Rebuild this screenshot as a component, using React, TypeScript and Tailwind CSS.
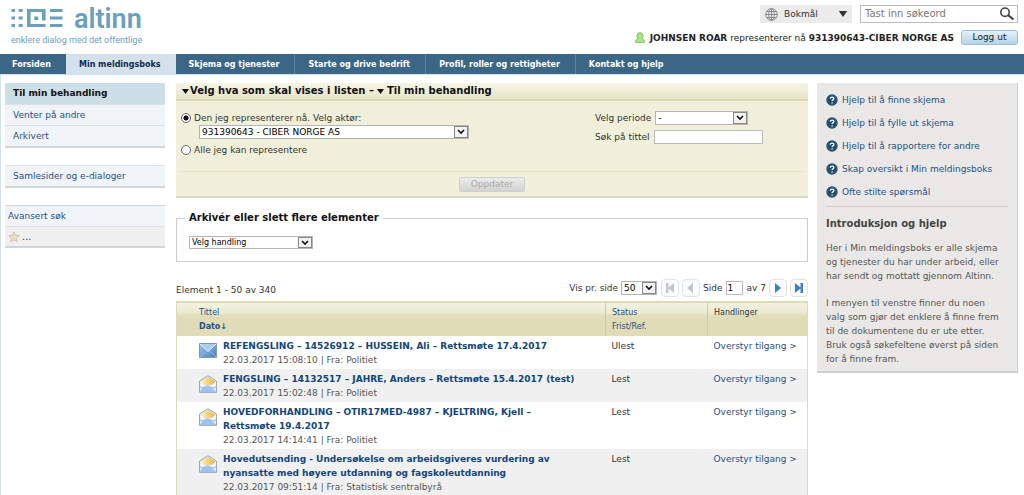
import { useState } from 'react';
import type { ReactNode } from 'react';
import clsx from 'clsx';

const NAV_ITEMS = [
    'Forsiden',
    'Min meldingsboks',
    'Skjema og tjenester',
    'Starte og drive bedrift',
    'Profil, roller og rettigheter',
    'Kontakt og hjelp',
];

const HELP_LINKS = [
    'Hjelp til å finne skjema',
    'Hjelp til å fylle ut skjema',
    'Hjelp til å rapportere for andre',
    'Skap oversikt i Min meldingsboks',
    'Ofte stilte spørsmål',
];

type Message = {
    title: string;
    date: string;
    from: string;
    status: 'Ulest' | 'Lest';
};

const MESSAGES: Message[] = [
    { title: 'REFENGSLING – 14526912 – HUSSEIN, Ali – Rettsmøte 17.4.2017', date: '22.03.2017 15:08:10', from: 'Politiet', status: 'Ulest' },
    { title: 'FENGSLING – 14132517 – JAHRE, Anders – Rettsmøte 15.4.2017 (test)', date: '22.03.2017 15:02:48', from: 'Politiet', status: 'Lest' },
    { title: 'HOVEDFORHANDLING – OTIR17MED-4987 – KJELTRING, Kjell – Rettsmøte 19.4.2017', date: '22.03.2017 14:14:41', from: 'Politiet', status: 'Lest' },
    { title: 'Hovedutsending - Undersøkelse om arbeidsgiveres vurdering av nyansatte med høyere utdanning og fagskoleutdanning', date: '22.03.2017 09:51:14', from: 'Statistisk sentralbyrå', status: 'Lest' },
];

// --- ICONS ---

function LogoMark() {
    return (
        <svg width="52" height="20" viewBox="0 0 52 20" fill="#6a9fbd" aria-hidden="true">
            <path d="M.5 0h3.500v3H.5zM.5 7.500h3.500v3H.5zM.5 15h3.500v3H.5zM7.700 0h4v3h-4zM7.700 7.500h4v3h-4zM7.700 15h4v3h-4z" />
            <path d="M16 0h18.600v11.500h-3.600V3H19.600v12h15v3H16zM23.300 7.500h4v3.600h-4z" />
            <path d="M39 0h12.500v3H39zM39 7.500h12.500v3H39zM39 15h12.500v3H39z" />
        </svg>
    );
}

function GlobeIcon() {
    return (
        <svg width="13" height="13" viewBox="0 0 13 13" fill="none" stroke="#777" strokeWidth="0.8" aria-hidden="true">
            <circle cx="6.5" cy="6.5" r="5.8" />
            <ellipse cx="6.5" cy="6.5" rx="2.8" ry="5.8" />
            <path d="M6.5.7v11.6M.7 6.5h11.6M1.5 3.5h10M1.5 9.5h10" />
        </svg>
    );
}

function SearchIcon() {
    return (
        <svg width="16" height="14" viewBox="0 0 16 14" fill="none" stroke="#444" aria-hidden="true">
            <circle cx="6" cy="5.2" r="4.2" strokeWidth="1.6" />
            <path d="M9.2 8.2l5.3 4.3" strokeWidth="2.2" />
        </svg>
    );
}

function PersonIcon() {
    return (
        <svg width="10" height="11" viewBox="0 0 10 11" fill="#a5e48a" stroke="#6cc253" strokeWidth="0.8" aria-hidden="true">
            <path d="M.6 10.4C.6 8 1.2 7.4 2.6 6.8 2 5.6 2 4.6 2 3.8A3 3.2 0 0 1 8 3.8C8 4.6 8 5.6 7.4 6.8c1.400.6 2 1.200 2 3.600z" />
        </svg>
    );
}

function TriangleDown({ className }: { className?: string }) {
    return (
        <svg className={clsx('shrink-0', className)} width="7" height="5" viewBox="0 0 7 5" fill="currentColor" aria-hidden="true">
            <path d="M0 0h7L3.5 5z" />
        </svg>
    );
}

function HelpIcon() {
    return (
        <svg width="12" height="12" viewBox="0 0 12 12" className="shrink-0" aria-hidden="true">
            <circle cx="6" cy="6" r="5.7" fill="#1f4a68" />
            <circle cx="6" cy="6" r="4.6" fill="none" stroke="#3c6c8c" strokeWidth="0.6" />
            <path d="M4.2 4.8c0-2.300 3.700-2.300 3.700-.2 0 1.300-1.800 1.300-1.800 2.500M6.100 8.200v1.400" fill="none" stroke="#fff" strokeWidth="1.3" />
        </svg>
    );
}

function StarIcon() {
    return (
        <svg width="12" height="12" viewBox="0 0 11 11" aria-hidden="true">
            <path d="M5.5.7l1.400 3.200 3.500.3-2.700 2.300.9 3.500-3.100-1.900L2.400 10l.9-3.500L.6 4.200l3.500-.3z" fill="#ecdcc4" stroke="#cbbda6" strokeWidth="0.8" />
        </svg>
    );
}

function ClosedEnvelope() {
    return (
        <svg width="18" height="18" viewBox="0 0 18 18" role="img" aria-label="Ulest">
            <defs>
                <linearGradient id="closed" x1="0" y1="0" x2="1" y2="1">
                    <stop offset="0" stopColor="#9cc4ec" />
                    <stop offset="1" stopColor="#4a7fbd" />
                </linearGradient>
            </defs>
            <path d="M.5 1.500h17v14H.5z" fill="url(#closed)" stroke="#7f98b0" />
            <path d="M1 15l6-6M17 15l-6-6" stroke="#8db6e2" fill="none" />
            <path d="M1 2l8 7.500L17 2z" fill="#a9cdf0" />
            <path d="M1 2l8 7.500L17 2" fill="none" stroke="#e6f2fd" />
        </svg>
    );
}

function OpenEnvelope() {
    return (
        <svg width="18" height="18" viewBox="0 0 18 18" role="img" aria-label="Lest">
            <defs>
                <linearGradient id="paper" x1="0" y1="0" x2="1" y2="0">
                    <stop offset="0" stopColor="#fdf0c0" />
                    <stop offset="1" stopColor="#eeb33c" />
                </linearGradient>
            </defs>
            <path d="M.5 6L9 .6 17.500 6v11.400H.5z" fill="#dfeaf6" stroke="#98a9bd" />
            <path d="M1.800 6.500L9 2 16.200 6.500l-2.700 3.300h-9z" fill="url(#paper)" />
            <path d="M1.500 7.300l4 3h7l4-3v4.200l-2.500 1.500C10 9 7 9.500 4.500 13L1.500 11z" fill="#f6fafe" />
            <path d="M1 16.900c1.500-3.400 4-5.400 7-5.400s6 2 9 5.400z" fill="#9fc2ea" />
            <path d="M1 12l3.500 1c2-2.600 6-2.800 8.500 0l4-1" stroke="#86a9d2" strokeWidth="0.8" fill="none" />
        </svg>
    );
}

// --- FORM PARTS ---

type SelectBoxProps = {
    id: string;
    options: string[];
    label?: string;
    className?: string;
};

function SelectBox({ id, options, label, className }: SelectBoxProps) {
    return (
        <span className={clsx('relative inline-block border border-[#b4b4b4] bg-white', className)}>
            <select id={id} aria-label={label} className="block h-full w-full appearance-none bg-transparent pr-4 pl-[2px] leading-[12px] text-black">
                {options.map((option) => (
                    <option key={option}>{option}</option>
                ))}
            </select>
            <span className="pointer-events-none absolute inset-y-0 right-0 flex w-[14px] items-center justify-center border border-[#888] bg-[#f2f2f2]">
                <svg width="8" height="6" viewBox="0 0 8 6" fill="none" stroke="#111" strokeWidth="1.6" aria-hidden="true">
                    <path d="M1 1l3 3 3-3" />
                </svg>
            </span>
        </span>
    );
}

function PagerButton({ label, disabled, children }: { label: string; disabled?: boolean; children: ReactNode }) {
    return (
        <button
            type="button"
            aria-label={label}
            disabled={disabled}
            className={clsx(
                'flex h-[18px] w-[18px] items-center justify-center rounded-[4px] border border-[#e0e3e6] bg-[#fbfcfd]',
                disabled ? 'text-[#c3c6ca]' : 'text-[#3f7fc8]',
            )}
        >
            <svg width="10" height="10" viewBox="0 0 10 10" fill="currentColor" aria-hidden="true">
                {children}
            </svg>
        </button>
    );
}

// --- PAGE SECTIONS ---

function Header() {
    return (
        <header className="flex h-[54px] justify-between pr-[6px] pl-[11px]">
            <a href="#" className="block pt-[9px] text-[#6a9fbd]">
                <span className="flex h-5 items-start gap-[11px]">
                    <LogoMark />
                    <span className="font-['Roboto',sans-serif] text-[27px] leading-5 font-semibold">altinn</span>
                </span>
                <span className="block pt-[5px] font-['Roboto',sans-serif] text-[9px] leading-3">enklere dialog med det offentlige</span>
            </a>
            <div className="flex flex-col items-end gap-[7px] pt-[5px]">
                <div className="flex gap-2">
                    <button type="button" className="flex h-[18px] w-[92px] items-center bg-[#ebebeb] pr-1 pl-[5px] text-[#333]">
                        <GlobeIcon />
                        <span className="pl-[6px]">Bokmål</span>
                        <TriangleDown className="ml-auto h-[6px] w-[10px]" />
                    </button>
                    <div className="flex h-[18px] w-[158px] items-center border border-[#bbb] pr-[2px]">
                        <input type="text" aria-label="Søk" placeholder="Tast inn søkeord" className="w-full min-w-0 pl-1 text-[10px] leading-4 outline-none placeholder:text-[#777]" />
                        <button type="button" aria-label="Søk">
                            <SearchIcon />
                        </button>
                    </div>
                </div>
                <div className="flex items-center text-[#222]">
                    <PersonIcon />
                    <p className="pl-[5px] whitespace-nowrap">
                        <strong>JOHNSEN ROAR</strong> representerer nå <strong>931390643-CIBER NORGE AS</strong>
                    </p>
                    <button type="button" className="ml-[7px] h-[15px] w-[57px] rounded-[3px] border border-[#9dbdd4] bg-linear-to-b from-[#e3f1fa] to-[#b4d4ea] leading-[13px] text-[#222]">
                        Logg ut
                    </button>
                </div>
            </div>
        </header>
    );
}

function NavBar() {
    return (
        <nav className="flex h-5 bg-[#3c6685] text-[8px] leading-[21px] font-bold text-white">
            {NAV_ITEMS.map((item, i) => (
                <a
                    key={item}
                    href="#"
                    aria-current={item === 'Min meldingsboks' ? 'page' : undefined}
                    className={clsx(
                        'pr-[15px] whitespace-nowrap',
                        i === 0 ? 'pl-3' : 'pl-[13px]',
                        item === 'Min meldingsboks' && 'bg-[#d5e1ea] text-[#0d2b52]',
                        i > 1 && i < NAV_ITEMS.length - 1 && 'border-r border-[#5f839c]',
                    )}
                >
                    {item}
                </a>
            ))}
        </nav>
    );
}

function SideMenu() {
    return (
        <aside className="flex w-40 shrink-0 flex-col gap-[17px] leading-5 text-[#1f4f85]">
            <ul className="border-b-2 border-[#d3d6d8] bg-[#f0f4f8]">
                <li className="bg-[#cddfe6] px-2 leading-[21px] font-bold text-[#111]">
                    <a href="#">Til min behandling</a>
                </li>
                <li className="border-t border-[#d8e0e6] px-2">
                    <a href="#">Venter på andre</a>
                </li>
                <li className="border-t border-[#d8e0e6] px-2">
                    <a href="#">Arkivert</a>
                </li>
            </ul>
            <ul className="border-t border-b-2 border-t-[#e0e4e7] border-b-[#d3d6d8] bg-[#f0f4f8]">
                <li className="px-2">
                    <a href="#">Samlesider og e-dialoger</a>
                </li>
            </ul>
            <ul className="border-t border-b-2 border-t-[#d0d6da] border-b-[#d3d6d8] bg-[#f0f4f8]">
                <li className="px-[3px]">
                    <a href="#">Avansert søk</a>
                </li>
                <li className="flex h-5 items-center gap-[2px] border-t border-[#e0e0e0] bg-[#f0f0f0] px-[3px] text-[#333]">
                    <StarIcon />
                    <a href="#" className="text-[10px]">...</a>
                </li>
            </ul>
        </aside>
    );
}

function FilterPanel() {
    const [scope, setScope] = useState('self');

    return (
        <section className="border-b-2 border-[#d9d9cc] bg-[#f0f0da] text-[#333]">
            <h2 className="flex h-[18px] items-center border-b-2 border-[#dcdab4] bg-linear-to-b from-[#f5f5e6] to-[#e6e5c8] pl-[6px] text-[10px] font-bold text-[#111]">
                <TriangleDown className="mr-[1px]" />
                Velg hva som skal vises i listen –
                <TriangleDown className="mx-[3px]" />
                Til min behandling
            </h2>
            <form className="px-[5px]" onSubmit={(e) => e.preventDefault()}>
                <div className="flex border-b border-[#e0dfc6] pt-[10px] pb-[14px]">
                    <div className="flex-1">
                        <label className="flex h-[14px] items-center gap-[3px]">
                            <input type="radio" name="scope" checked={scope === 'self'} onChange={() => setScope('self')} className="h-[10px] w-[10px] appearance-none rounded-full border border-[#666] bg-white checked:bg-[radial-gradient(circle,#111_40%,#fff_50%)]" />
                            Den jeg representerer nå. Velg aktør:
                        </label>
                        <div className="flex pl-[18px]">
                            <SelectBox id="actor" label="Aktør" options={['931390643 - CIBER NORGE AS']} className="h-[14px] w-[270px]" />
                        </div>
                        <label className="mt-[4px] flex h-[14px] items-center gap-[3px]">
                            <input type="radio" name="scope" checked={scope === 'all'} onChange={() => setScope('all')} className="h-[10px] w-[10px] appearance-none rounded-full border border-[#666] bg-white checked:bg-[radial-gradient(circle,#111_40%,#fff_50%)]" />
                            Alle jeg kan representere
                        </label>
                    </div>
                    <div className="w-[208px]">
                        <div className="flex h-[14px] items-center gap-1">
                            <label htmlFor="period">Velg periode</label>
                            <SelectBox id="period" options={['-']} className="h-[14px] w-[93px]" />
                        </div>
                        <div className="mt-[5px] flex h-[14px] items-center gap-1">
                            <label htmlFor="title">Søk på tittel</label>
                            <input id="title" type="text" className="h-[14px] w-[109px] border border-[#bbb] bg-white px-1" />
                        </div>
                    </div>
                </div>
                <div className="flex h-[24px] items-center justify-center">
                    <button type="submit" disabled className="h-[15px] w-[66px] rounded-[2px] border border-[#cfcfcb] bg-linear-to-b from-[#ececec] to-[#d2d2d2] leading-[13px] text-[#a8a8a8]">
                        Oppdater
                    </button>
                </div>
            </form>
        </section>
    );
}

function BulkActions() {
    return (
        <fieldset className="mt-[13px] h-[51px] border border-[#ccc] pl-3">
            <legend className="-ml-1 px-1 text-[10px] leading-[14px] font-bold text-[#111]">Arkivér eller slett flere elementer</legend>
            <div className="flex pt-[11px]">
                <SelectBox id="action" label="Velg handling" options={['Velg handling']} className="h-[13px] w-[124px] text-[8px]" />
            </div>
        </fieldset>
    );
}

function Pager() {
    return (
        <div className="flex items-end justify-between pt-[17px] pb-[4px] text-[#333]">
            <p>Element 1 - 50 av 340</p>
            <div className="flex items-center gap-[3px]">
                <label htmlFor="pagesize">Vis pr. side</label>
                <SelectBox id="pagesize" options={['50', '100']} className="mr-[1px] h-[14px] w-[36px]" />
                <PagerButton label="Første side" disabled>
                    <path d="M1 0h2.500v4.500L9 0v10L3.500 5.500V10H1z" />
                </PagerButton>
                <PagerButton label="Forrige side" disabled>
                    <path d="M7 0v10L1 5z" />
                </PagerButton>
                <label htmlFor="page">Side</label>
                <input id="page" type="text" defaultValue="1" className="h-[14px] w-[17px] border border-[#bbb] bg-white px-[1px] text-black" />
                <span className="pl-[1px]">av 7</span>
                <PagerButton label="Neste side">
                    <path d="M2 0v10l6-5z" />
                </PagerButton>
                <PagerButton label="Siste side">
                    <path d="M1 0l5.500 4.500V0H9v10H6.500V5.500L1 10z" />
                </PagerButton>
            </div>
        </div>
    );
}

function MessageTable() {
    return (
        <table className="w-full table-fixed border border-t-2 border-[#dcdab8] text-left">
            <colgroup>
                <col />
                <col className="w-[102px]" />
                <col className="w-[100px]" />
            </colgroup>
            <thead className="bg-[linear-gradient(#f3f3e2,#e9e8cf_12px,#e0dcb8_13px)] align-top text-[8px] leading-[14px] text-[#1f4f85]">
                <tr>
                    <th scope="col" className="pt-[3px] pb-[2px] pl-[22px] font-normal">
                        <a href="#" className="block">Tittel</a>
                        <a href="#" className="block font-bold">Dato↓</a>
                    </th>
                    <th scope="col" className="border-l border-[#cfcba6] pt-[3px] pl-[6px] font-normal">
                        <a href="#" className="block">Status</a>
                        <a href="#" className="block">Frist/Ref.</a>
                    </th>
                    <th scope="col" className="border-l border-[#cfcba6] pt-[3px] pl-[6px] font-normal text-[#333]">Handlinger</th>
                </tr>
            </thead>
            <tbody className="align-top leading-[14px]">
                {MESSAGES.map((message) => (
                    <tr key={message.date} className="even:bg-[#f0f0f0]">
                        <td className="pt-[3px] pb-[2px] pl-[22px]">
                            <div className="flex gap-[6px]">
                                <div className="shrink-0 pt-[3px]">{message.status === 'Ulest' ? <ClosedEnvelope /> : <OpenEnvelope />}</div>
                                <div className="pr-5">
                                    <a href="#" className="block font-bold text-[#12457e]">{message.title}</a>
                                    <p className="text-[#555]">
                                        {message.date} | Fra: {message.from}
                                    </p>
                                </div>
                            </div>
                        </td>
                        <td className="pt-[3px] pl-[6px] text-[#333]">{message.status}</td>
                        <td className="pt-[3px] pl-[6px] whitespace-nowrap">
                            <a href="#" className="text-[#1f4f85]">Overstyr tilgang &gt;</a>
                        </td>
                    </tr>
                ))}
            </tbody>
        </table>
    );
}

function HelpPanel() {
    return (
        <aside className="w-[201px] shrink-0 border-r border-b-2 border-[#cfcdcb] bg-[#eae8e7] px-[9px] pb-[5px] text-[#555]">
            <ul className="border-b border-[#cfcdcb] pt-[5px] pb-[3px]">
                {HELP_LINKS.map((link) => (
                    <li key={link} className="flex h-[23px] items-center gap-1 text-[#1f4f85]">
                        <HelpIcon />
                        <a href="#" className="whitespace-nowrap">{link}</a>
                    </li>
                ))}
            </ul>
            <h2 className="pt-[10px] text-[10px] font-bold text-[#444]">Introduksjon og hjelp</h2>
            <p className="pt-[10px] pr-1">Her i Min meldingsboks er alle skjema og tjenester du har under arbeid, eller har sendt og mottatt gjennom Altinn.</p>
            <p className="pt-[13px] pr-1">I menyen til venstre finner du noen valg som gjør det enklere å finne frem til de dokumentene du er ute etter. Bruk også søkefeltene øverst på siden for å finne fram.</p>
        </aside>
    );
}

export default function App() {
    return (
        <div className="bg-white font-['DejaVu_Sans',Verdana,sans-serif] text-[9px] leading-[14px]">
            <Header />
            <NavBar />
            <div className="flex items-start border-t border-l border-[#cfe3ee] pt-2 pr-[6px] pl-1">
                <SideMenu />
                <main className="min-w-0 flex-1 pr-[9px] pl-[11px]">
                    <FilterPanel />
                    <BulkActions />
                    <Pager />
                    <MessageTable />
                </main>
                <HelpPanel />
            </div>
        </div>
    );
}
